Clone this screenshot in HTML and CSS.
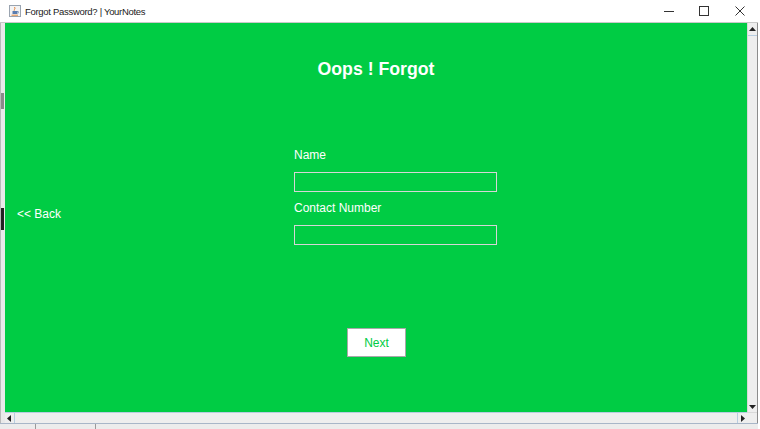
FILE: index.html
```html
<!DOCTYPE html>
<html>
<head>
<meta charset="utf-8">
<title>Forgot Password? | YourNotes</title>
<link rel="stylesheet" href="styles.css">
</head>
<body>
<div class="window">
  <div class="titlebar">
    <svg class="app-icon" width="12" height="12" viewBox="0 0 12 12">
      <rect x="0.5" y="0.5" width="11" height="11" fill="#f4f4f4" stroke="#9aa4b0"/>
      <path d="M3.5 9 h4.5 v-3 h-4.5 z" fill="#5a7db0"/>
      <path d="M8 6.5 h1.2 v1.6 h-1.2" fill="none" stroke="#5a7db0" stroke-width="0.8"/>
      <path d="M5.5 2 q1 1.2 0 2.4 q-0.8 1 0 1.4" fill="none" stroke="#e07a2a" stroke-width="0.9"/>
      <path d="M2.5 10.2 h6.5" stroke="#e07a2a" stroke-width="0.9"/>
    </svg>
    <span class="caption">Forgot Password? | YourNotes</span>
    <div class="controls">
      <span class="ctl"><svg width="10" height="10" viewBox="0 0 10 10"><path d="M0 5.5 h10" stroke="#333" stroke-width="1"/></svg></span>
      <span class="ctl"><svg width="10" height="10" viewBox="0 0 10 10"><rect x="0.5" y="0.5" width="9" height="9" fill="none" stroke="#333"/></svg></span>
      <span class="ctl"><svg width="10" height="10" viewBox="0 0 10 10"><path d="M0.5 0.5 L9.5 9.5 M9.5 0.5 L0.5 9.5" stroke="#333" stroke-width="1"/></svg></span>
    </div>
  </div>
  <div class="client">
    <div class="edge"><span class="dark d1"></span><span class="dark d2"></span></div>
    <div class="panel">
      <h1 class="title">Oops ! Forgot</h1>
      <div class="main">
        <div class="back">&lt;&lt; Back</div>
        <div class="form">
          <label class="label">Name</label>
          <div class="field"></div>
          <label class="label second">Contact Number</label>
          <div class="field"></div>
        </div>
      </div>
      <div class="actions"><div class="next">Next</div></div>
    </div>
    <div class="vscroll">
      <svg class="arrow-up" width="7" height="4" viewBox="0 0 7 4"><path d="M0 4 L3.5 0 L7 4 z" fill="#222"/></svg>
      <div class="vtrack"></div>
      <svg class="arrow-down" width="7" height="4" viewBox="0 0 7 4"><path d="M0 0 L3.5 4 L7 0 z" fill="#222"/></svg>
    </div>
    <div class="rborder"></div>
    <div class="corner-left"></div>
    <div class="hscroll">
      <svg class="arrow-left" width="4" height="7" viewBox="0 0 4 7"><path d="M4 0 L0 3.5 L4 7 z" fill="#222"/></svg>
      <div class="htrack"></div>
      <svg class="arrow-right" width="4" height="7" viewBox="0 0 4 7"><path d="M0 0 L4 3.5 L0 7 z" fill="#222"/></svg>
    </div>
    <div class="corner"></div>
    <div class="rborder"></div>
  </div>
  <div class="desk">
    <span class="tick t1"></span><span class="tick t2"></span>
  </div>
</div>
</body>
</html>
```
FILE: styles.css
```css
* { box-sizing: border-box; }
html, body { margin: 0; padding: 0; }
body {
  width: 760px;
  height: 429px;
  overflow: hidden;
  background: #ffffff;
  font-family: "Liberation Sans", Arial, sans-serif;
}
.window {
  width: 760px;
  height: 429px;
  display: flex;
  flex-direction: column;
}
.titlebar {
  height: 23px;
  background: #ffffff;
  border-bottom: 1px solid #c9c9c9;
  display: flex;
  align-items: center;
  padding-left: 9px;
  width: 758px;
}
.app-icon { flex-shrink: 0; margin-top: -1px; }
.caption {
  margin-left: 4px;
  font-family: "Liberation Sans", Arial, sans-serif;
  font-size: 9.5px;
  color: #1a1a1a;
  letter-spacing: -0.3px;
}
.controls {
  margin-left: auto;
  display: flex;
  height: 22px;
}
.ctl {
  width: 36px;
  height: 22px;
  display: flex;
  align-items: center;
  justify-content: center;
}
.ctl:first-child { width: 34px; }
.client {
  display: grid;
  grid-template-columns: 5px 742px 10px 1px;
  grid-template-rows: 389px 11px;
  width: 758px;
}
.edge {
  background: #e9e9e9;
  border-left: 1px solid #b9b9b9;
  position: relative;
}
.dark { position: absolute; left: 0; width: 3px; background: #555; }
.d1 { top: 70px; height: 16px; background: #8a8a8a; }
.d2 { top: 185px; height: 22px; background: #222; }
.panel {
  background: #00cc44;
  color: #ffffff;
  display: flex;
  flex-direction: column;
}
.title {
  margin: 0;
  padding-top: 35px;
  height: 57px;
  line-height: 22px;
  font-size: 17.7px;
  font-weight: bold;
  text-align: center;
}
.main {
  display: flex;
  margin-top: 68px;
}
.back {
  width: 277px;
  margin-left: 12px;
  margin-top: 59px;
  flex-shrink: 0;
  font-size: 12px;
  line-height: 14px;
}
.form {
  width: 203px;
  display: flex;
  flex-direction: column;
}
.label {
  font-size: 12px;
  line-height: 14px;
  height: 14px;
}
.label.second { margin-top: 9px; }
.field {
  margin-top: 10px;
  height: 20px;
  border: 1px solid #d6d6d6;
  background: transparent;
}
.actions {
  display: flex;
  justify-content: center;
  margin-top: 83px;
  padding-left: 1px;
}
.next {
  width: 59px;
  height: 29px;
  background: #ffffff;
  border: 1px solid #a9a9a9;
  color: #00cc44;
  font-size: 12px;
  display: flex;
  align-items: center;
  justify-content: center;
}
.vscroll {
  background: #eeeeee;
  display: flex;
  flex-direction: column;
  align-items: center;
  border-left: 1px solid #d9d9d9;
}
.arrow-up { margin-top: 4px; }
.vtrack {
  flex: 1;
  width: 100%;
  margin-top: 4px;
  border-top: 1px solid #b8cde0;
  margin-bottom: 3px;
}
.arrow-down { margin-bottom: 3px; }
.rborder { background: #8c8c8c; }
.corner-left { background: #e9e9e9; border-left: 1px solid #b9b9b9; }
.hscroll {
  background: #eeeeee;
  border-top: 1px solid #b8cde0;
  display: flex;
  align-items: center;
}
.arrow-left { margin-left: 2px; }
.htrack {
  flex: 1;
  height: 100%;
  margin-left: 3px;
  border-left: 1px solid #b8cde0;
  border-right: 1px solid #b8cde0;
  margin-right: 3px;
}
.arrow-right { margin-right: 2px; }
.corner { background: #eeeeee; border-top: 1px solid #d9d9d9; }
.desk {
  flex: 1;
  background: #ececec;
  border-top: 1px solid #a8b6c8;
  position: relative;
  width: 758px;
}
.tick { position: absolute; top: 0; bottom: 0; width: 1px; background: #9a9a9a; }
.t1 { left: 35px; }
.t2 { left: 95px; }
```
